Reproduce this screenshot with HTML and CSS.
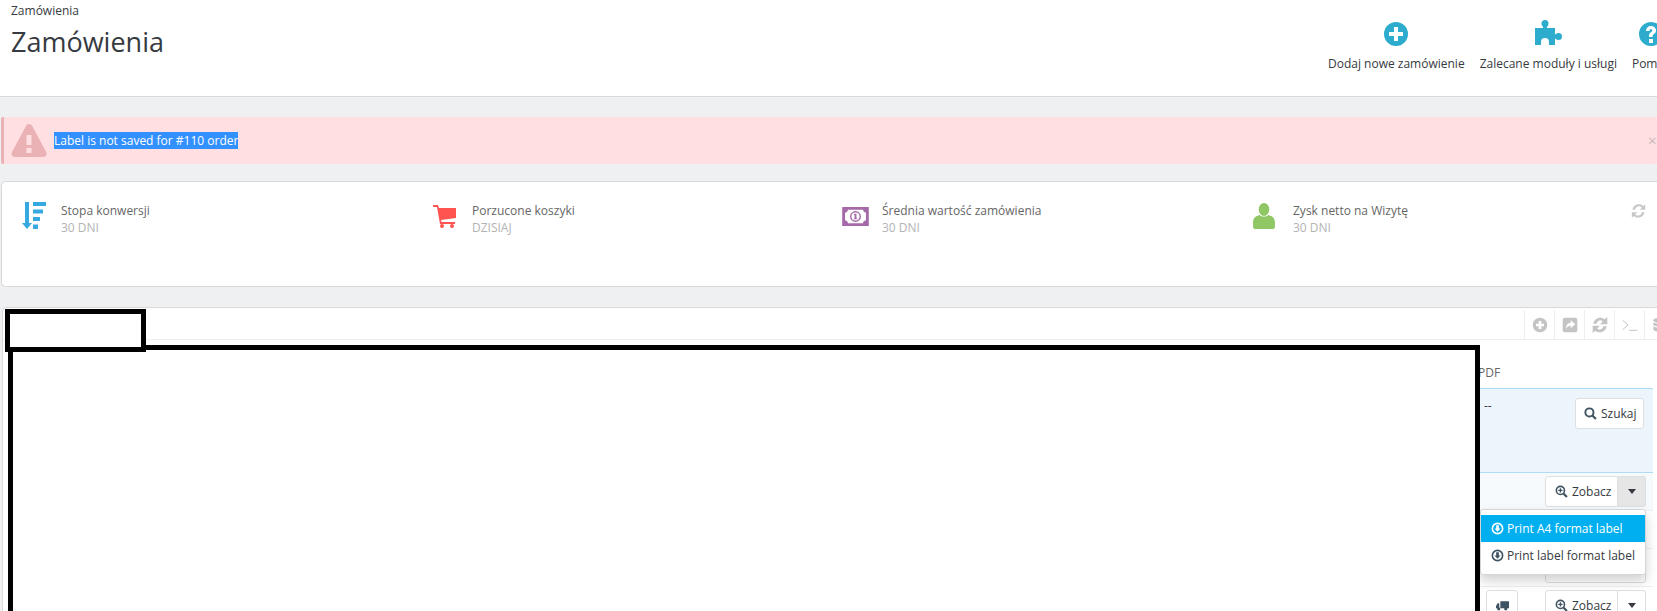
FILE: index.html
```html
<!DOCTYPE html>
<html lang="pl">
  <head>
    <meta charset="UTF-8" />
    <title>Zamówienia</title>
    <link rel="stylesheet" href="styles.css">
  </head>
  <body>
    <header class="page-head">
      <div class="head-left">
        <div class="crumb">Zamówienia</div>
        <h2 class="page-title">Zamówienia</h2>
      </div>
      <nav class="toolbar">
        <a class="tool tool-add">
          <svg class="tool-icon" viewBox="0 0 24 24"><path fill="#2eacce" fill-rule="evenodd" d="M12 0a12 12 0 1 0 0 24a12 12 0 0 0 0-24zM10 5h4v5h5v4h-5v5h-4v-5H5v-4h5z"/></svg>
          <span>Dodaj nowe zamówienie</span>
        </a>
        <a class="tool tool-mod">
          <svg class="tool-icon tool-icon-puzzle" viewBox="0 0 27 25"><path fill="#2eacce" d="M0 8h8V5h4v3h8v6.500h3v4h-3V25h-6v-3a4 4 0 0 0-8 0v3H0z"/><circle fill="#2eacce" cx="10" cy="3.500" r="3.500"/><circle fill="#2eacce" cx="23.500" cy="16.500" r="3.500"/></svg>
          <span>Zalecane moduły i usługi</span>
        </a>
        <a class="tool tool-help">
          <svg class="tool-icon" viewBox="0 0 24 24"><path fill="#2eacce" fill-rule="evenodd" d="M12 0a12 12 0 1 0 0 24a12 12 0 0 0 0-24zM10 17h4v4h-4zM7 9c0-3 2.200-5 5-5s5 2 5 4.500c0 2.200-1.200 3.200-2.500 4c-.7.500-.9.800-.9 2.500h-3.700c0-2.800.6-3.800 2-4.800c1-.7 1.400-1 1.400-1.700c0-.7-.6-1.200-1.400-1.200c-.9 0-1.500.6-1.500 1.700z"/></svg>
          <span>Pomoc</span>
        </a>
      </nav>
    </header>

    <div class="alert">
      <svg class="alert-icon" viewBox="0 0 36 34"><path fill="#ebb2b6" fill-rule="evenodd" d="M18 0c1.500 0 2.500.8 3.200 2l14 26c1.200 2.500-.2 5-3 5H4c-2.800 0-4.200-2.500-3-5l14-26C15.500.8 16.500 0 18 0zM15.500 11v10h5V11zM15.500 24v5h5v-5z"/></svg>
      <span class="alert-text">Label is not saved for #110 order</span>
      <span class="alert-close">×</span>
    </div>

    <section class="kpi-panel">
      <div class="kpi">
        <svg class="kpi-icon" viewBox="0 0 24 28"><path fill="#36a9e1" d="M3 0h4v21h3l-5 6l-5-6h3zM11 0h13v4H11zM11 7.500h10v4H11zM11 15h7v4h-7zM11 22.500h5v4.500h-5z"/></svg>
        <div class="kpi-text"><div class="kpi-name">Stopa konwersji</div><div class="kpi-sub">30 DNI</div></div>
      </div>
      <div class="kpi">
        <svg class="kpi-icon" viewBox="0 0 24 24"><path fill="#ff5450" d="M0 1h5l1 3h17v10l-15 2l.5 2H22v2H7L4 3H0z"/><circle fill="#ff5450" cx="9" cy="22" r="2"/><circle fill="#ff5450" cx="19" cy="22" r="2"/></svg>
        <div class="kpi-text"><div class="kpi-name">Porzucone koszyki</div><div class="kpi-sub">DZISIAJ</div></div>
      </div>
      <div class="kpi">
        <svg class="kpi-icon kpi-icon-money" viewBox="0 0 28 20"><path fill="#a569a9" fill-rule="evenodd" d="M0 0h28v20H0zM6 3c0 1.500-1 2.500-3 3v8c2 .5 3 1.500 3 3h16c0-1.500 1-2.500 3-3V6c-2-.5-3-1.500-3-3z"/><circle fill="#fff" stroke="#a569a9" stroke-width="1.500" cx="14" cy="10" r="5"/><path fill="#a569a9" d="M13.500 7h1.500v5h1v1h-4v-1h1V8.500h-1V8z"/></svg>
        <div class="kpi-text"><div class="kpi-name">Średnia wartość zamówienia</div><div class="kpi-sub">30 DNI</div></div>
      </div>
      <div class="kpi">
        <svg class="kpi-icon kpi-icon-user" viewBox="0 0 22 24"><ellipse fill="#8fc764" cx="11" cy="6" rx="4.800" ry="6"/><path fill="#8fc764" d="M7 11c-4 1-6 3-6 7v4c0 1 1 2 2 2h16c1 0 2-1 2-2v-4c0-4-2-6-6-7c-2 2-6 2-8 0z"/></svg>
        <div class="kpi-text"><div class="kpi-name">Zysk netto na Wizytę</div><div class="kpi-sub">30 DNI</div></div>
      </div>
      <svg class="kpi-refresh" viewBox="0 0 24 24"><path fill="#c8c8c8" d="M3 10C4 5 8 2 12.500 2c3 0 5 1 6.500 2.500L22 2v8h-8l3-3c-1-1-2.700-2-4.500-2C10 5 7.500 7 7 10zM21 14c-1 5-5 8-9.500 8c-3 0-5-1-6.500-2.500L2 22v-8h8l-3 3c1 1 2.700 2 4.500 2c2.500 0 5-2 5.500-5z"/></svg>
    </section>

    <section class="orders-panel">
      <div class="panel-bar">
        <a class="bar-btn"><svg viewBox="0 0 24 24"><path fill="#c4c4c4" fill-rule="evenodd" d="M12 1a11 11 0 1 0 0 22a11 11 0 0 0 0-22zM10 6h4v4h4v4h-4v4h-4v-4H6v-4h4z"/></svg></a>
        <a class="bar-btn"><svg viewBox="0 0 24 24"><path fill="#c4c4c4" fill-rule="evenodd" d="M5 1h14c3 0 4 1 4 4v14c0 3-1 4-4 4H5c-3 0-4-1-4-4V5c0-3 1-4 4-4zM13 5v4c-4 0-7 2-7 9c1-3 3-5 7-5v4l7-6z"/></svg></a>
        <a class="bar-btn"><svg viewBox="0 0 24 24"><path fill="#c4c4c4" d="M2 10C3 4 8 1 12.500 1c3 0 5 1 6.500 2.500L23 0v11H12l4-4c-1-1-2-2-3.500-2C10 5 7.500 7 7 10zM22 14c-1 6-6 9-10.500 9c-3 0-5-1-6.500-2.500L1 24V13h11l-4 4c1 1 2 2 3.500 2c2.500 0 5-2 5.500-5z"/></svg></a>
        <a class="bar-btn"><svg viewBox="0 0 24 24"><path fill="none" stroke="#c4c4c4" stroke-width="1.500" d="M1 5l8 7l-8 7M11 20h12"/></svg></a>
        <a class="bar-btn"><svg viewBox="0 0 24 24"><ellipse fill="#c4c4c4" cx="12" cy="5" rx="10" ry="4"/><path fill="#c4c4c4" d="M2 8c2 3 18 3 20 0v4c-2 3-18 3-20 0zM2 14c2 3 18 3 20 0v5c-2 4-18 4-20 0z"/></svg></a>
      </div>
      <div class="pdf-col">PDF</div>
      <div class="filter-row">
        <span class="dashes">--</span>
        <button class="btn btn-search">
          <svg class="btn-icon" viewBox="0 0 24 24"><circle cx="10" cy="10" r="7.500" fill="none" stroke="#3f5462" stroke-width="3.500"/><path stroke="#3f5462" stroke-width="4" d="M15.500 15.500L22 22"/></svg>
          Szukaj
        </button>
      </div>
      <div class="order-row order-row-hover">
        <div class="btn-group open">
          <button class="btn btn-main">
            <svg class="btn-icon" viewBox="0 0 24 24"><circle cx="10" cy="10" r="7.500" fill="none" stroke="#3f5462" stroke-width="3"/><path stroke="#3f5462" stroke-width="4" d="M15.500 15.500L22 22"/><path stroke="#3f5462" stroke-width="2.500" d="M10 6v8M6 10h8"/></svg>
            Zobacz
          </button>
          <button class="btn btn-caret"><i class="caret"></i></button>
          <ul class="menu">
            <li class="menu-item active"><svg class="btn-icon" viewBox="0 0 24 24"><path fill="#fff" fill-rule="evenodd" d="M12 1a11 11 0 1 0 0 22a11 11 0 0 0 0-22zM12 4a8 8 0 1 1 0 16a8 8 0 0 1 0-16z"/><path fill="#fff" d="M9.500 6h5v6h3l-5.500 6l-5.500-6h3z"/></svg>Print A4 format label</li>
            <li class="menu-item"><svg class="btn-icon" viewBox="0 0 24 24"><path fill="#3f5462" fill-rule="evenodd" d="M12 1a11 11 0 1 0 0 22a11 11 0 0 0 0-22zM12 4a8 8 0 1 1 0 16a8 8 0 0 1 0-16z"/><path fill="#3f5462" d="M9.500 6h5v6h3l-5.500 6l-5.500-6h3z"/></svg>Print label format label</li>
          </ul>
        </div>
      </div>
      <div class="order-row"></div>
      <div class="order-row">
        <button class="btn btn-empty"></button>
      </div>
      <div class="order-row">
        <button class="btn btn-truck"><svg class="btn-icon" viewBox="0 0 24 20"><path fill="#3f5462" d="M8 2h16v13H8zM6 6v9H0v-4l3-5z"/><circle fill="#3f5462" cx="5" cy="16" r="3"/><circle fill="#3f5462" cx="18" cy="16" r="3"/></svg></button>
        <div class="btn-group">
          <button class="btn btn-main">
            <svg class="btn-icon" viewBox="0 0 24 24"><circle cx="10" cy="10" r="7.500" fill="none" stroke="#3f5462" stroke-width="3"/><path stroke="#3f5462" stroke-width="4" d="M15.500 15.500L22 22"/><path stroke="#3f5462" stroke-width="2.500" d="M10 6v8M6 10h8"/></svg>
            Zobacz
          </button>
          <button class="btn btn-caret plain"><i class="caret"></i></button>
        </div>
      </div>
      <div class="redact redact-table"></div>
      <div class="redact redact-title"></div>
    </section>
  </body>
</html>
```

FILE: styles.css
```css
html,
body {
  margin: 0;
  height: 611px;
  overflow: hidden;
}
body {
  font-family: "Open Sans", sans-serif;
  font-size: 12px;
  color: #363a41;
  background-color: #eff0f2;
}
.page-head {
  height: 96px;
  background-color: white;
  border-bottom: 1px solid #d8d9db;
  position: relative;
}
.head-left {
  padding: 3px 0 0 11px;
}
.crumb {
  font-size: 12px;
  line-height: 15px;
}
.page-title {
  margin: 7px 0 0 0;
  font-size: 27px;
  font-weight: 400;
  line-height: 34px;
}
.toolbar {
  position: absolute;
  top: 20px;
  left: 1328px;
  display: flex;
  gap: 15px;
}
.tool {
  display: flex;
  flex-direction: column;
  align-items: center;
  font-size: 12px;
  white-space: nowrap;
}
.tool-icon {
  width: 24px;
  height: 24px;
  margin: 2px 0 9px 0;
}
.tool-icon-puzzle {
  width: 27px;
  height: 25px;
  margin: 0 0 10px 0;
}
.alert {
  margin: 20px 0 0 1px;
  height: 47px;
  background-color: #ffdfe1;
  border-left: 3px solid #ebb2b6;
  border-radius: 2px;
  display: flex;
  align-items: center;
  position: relative;
}
.alert-icon {
  width: 36px;
  height: 34px;
  margin-left: 7px;
}
.alert-text {
  margin-left: 7px;
  font-size: 12px;
  line-height: 17px;
  background-color: #3390ff;
  color: white;
}
.alert-close {
  position: absolute;
  left: 1644px;
  top: 13px;
  font-size: 15px;
  color: #c9b7b9;
}
.kpi-panel {
  margin: 17px 0 0 1px;
  height: 104px;
  background-color: white;
  border: 1px solid #d8d9db;
  border-right: none;
  border-radius: 5px 0 0 5px;
  display: grid;
  grid-template-columns: 411px 411px 410px 411px;
  position: relative;
}
.kpi {
  display: flex;
  padding: 20px 0 0 20px;
  gap: 15px;
}
.kpi-icon {
  width: 24px;
  height: 28px;
  flex: none;
}
.kpi-icon-money {
  width: 27px;
  height: 19px;
  margin: 5px -2px 0 -2px;
}
.kpi-icon-user {
  margin: 0 2px 0 -2px;
}
.kpi-name {
  font-size: 12px;
  line-height: 17px;
  color: #666;
}
.kpi-sub {
  font-size: 12px;
  line-height: 17px;
  color: #b3b3b3;
}
.kpi-refresh {
  position: absolute;
  right: 10px;
  top: 21px;
  width: 17px;
  height: 16px;
}
.orders-panel {
  margin: 20px 0 0 2px;
  height: 303px;
  background-color: white;
  border-top: 1px solid #d8d9db;
  border-left: 1px solid #d8d9db;
  border-radius: 5px 0 0 0;
  position: relative;
  overflow: hidden;
}
.panel-bar {
  height: 31px;
  margin-right: -17px;
  border-bottom: 1px solid #eeeeee;
  display: flex;
  justify-content: flex-end;
}
.bar-btn {
  width: 29px;
  margin-top: 2px;
  border-left: 1px solid #eeeeee;
  display: flex;
  align-items: center;
  justify-content: center;
}
.bar-btn svg {
  width: 16px;
  height: 16px;
}
.pdf-col {
  margin: 24px 0 0 1475px;
  line-height: 17px;
  color: #666;
}
.filter-row {
  margin: 7px 4px 0 8px;
  height: 83px;
  background-color: #ecf5fb;
  border-top: 1px solid #aedbf5;
  border-bottom: 1px solid #aedbf5;
  position: relative;
}
.dashes {
  position: absolute;
  left: 1473px;
  top: 8px;
}
.btn {
  font-family: "Open Sans", sans-serif;
  font-size: 12px;
  color: #363a41;
  background-color: white;
  border: 1px solid #dedfe0;
  border-radius: 3px;
  height: 31px;
  padding: 0;
  display: inline-flex;
  align-items: center;
  gap: 4px;
}
.btn-icon {
  width: 13px;
  height: 13px;
  flex: none;
}
.btn-search {
  position: absolute;
  left: 1564px;
  top: 9px;
  width: 69px;
  padding-left: 8px;
}
.order-row {
  height: 38px;
  margin: 0 4px 0 8px;
  padding: 3px 7px 0 0;
  display: flex;
  justify-content: flex-end;
  align-items: flex-start;
  gap: 27px;
  border-bottom: 1px solid #eeeeee;
  box-sizing: border-box;
}
.order-row-hover {
  background-color: #f7fafd;
}
.btn-group {
  display: flex;
  position: relative;
}
.btn-main {
  width: 73px;
  border-radius: 3px 0 0 3px;
  padding-left: 9px;
  white-space: nowrap;
}
.btn-caret {
  width: 28px;
  border-left: none;
  border-radius: 0 3px 3px 0;
  background-color: #e6e6e6;
  justify-content: center;
}
.btn-caret.plain {
  background-color: white;
}
.btn-empty {
  width: 101px;
}
.caret {
  border-top: 5px solid #363a41;
  border-left: 4px solid transparent;
  border-right: 4px solid transparent;
}
.btn-truck {
  width: 32px;
  justify-content: center;
}
.menu {
  position: absolute;
  top: 33px;
  right: 0;
  width: 164px;
  margin: 0;
  padding: 5px 0;
  list-style: none;
  background-color: white;
  border: 1px solid #d4d5d7;
  border-radius: 3px;
  box-shadow: 0 6px 12px rgba(0, 0, 0, 0.18);
  z-index: 2;
}
.menu-item {
  height: 27px;
  padding-left: 10px;
  display: flex;
  align-items: center;
  gap: 3px;
  white-space: nowrap;
  color: #363a41;
}
.menu-item.active {
  background-color: #00aff0;
  color: white;
}
.redact {
  position: absolute;
  background-color: white;
  border: 5px solid black;
  box-sizing: border-box;
  z-index: 3;
}
.redact-title {
  left: 2px;
  top: 1px;
  width: 141px;
  height: 43px;
}
.redact-table {
  left: 5px;
  top: 37px;
  width: 1472px;
  height: 300px;
}
```
